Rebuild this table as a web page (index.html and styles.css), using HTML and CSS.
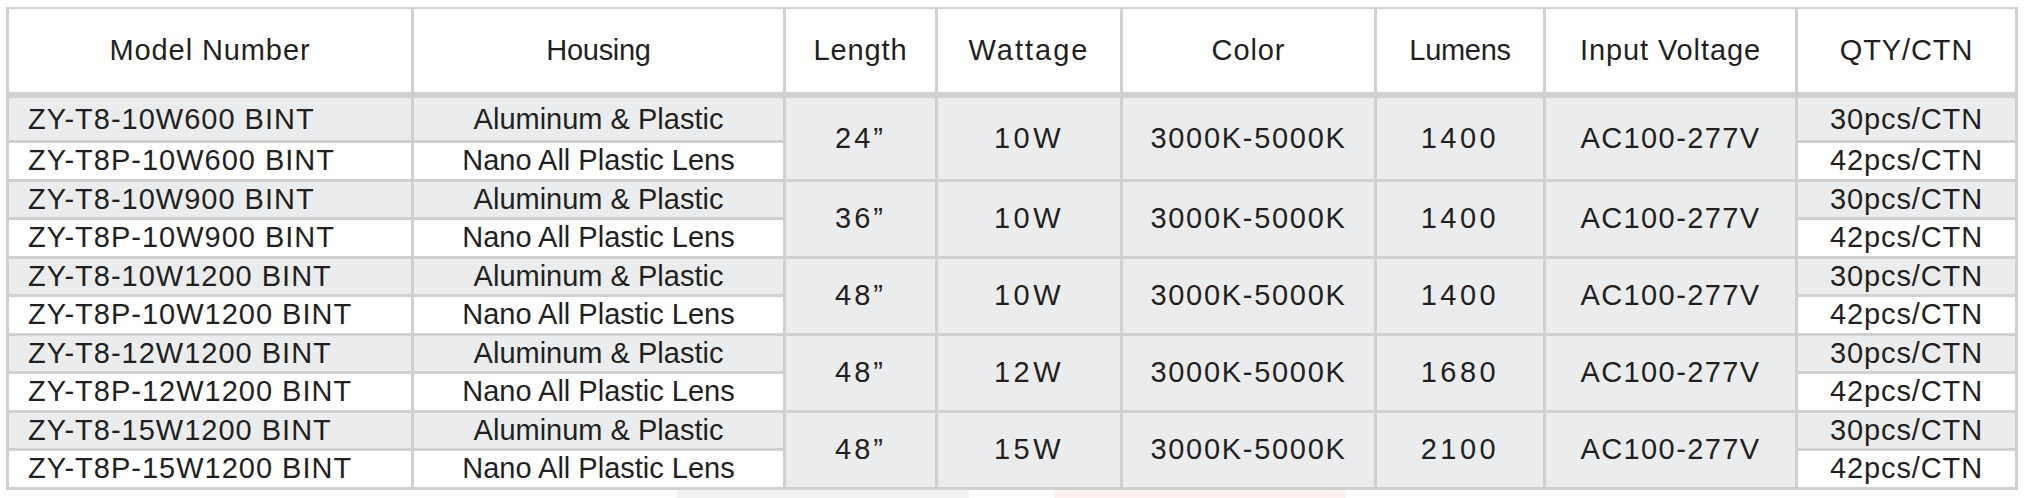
FILE: index.html
```html
<!DOCTYPE html>
<html lang="en">
<head>
<meta charset="utf-8">
<title>T8 Tube Specifications</title>
<link rel="stylesheet" href="styles.css">
</head>
<body>
<div class="sheet">
  <div class="hd">Model Number</div>
  <div class="hd tight">Housing</div>
  <div class="hd">Length</div>
  <div class="hd wide">Wattage</div>
  <div class="hd">Color</div>
  <div class="hd tight">Lumens</div>
  <div class="hd">Input Voltage</div>
  <div class="hd">QTY/CTN</div>

  <div class="c a model">ZY-T8-10W600 BINT</div>
  <div class="c a">Aluminum &amp; Plastic</div>
  <div class="c m len">24”</div>
  <div class="c m num">10W</div>
  <div class="c m cct">3000K-5000K</div>
  <div class="c m num">1400</div>
  <div class="c m volt">AC100-277V</div>
  <div class="c a qty">30pcs/CTN</div>
  <div class="c b model">ZY-T8P-10W600 BINT</div>
  <div class="c b">Nano All Plastic Lens</div>
  <div class="c b qty">42pcs/CTN</div>

  <div class="c a model">ZY-T8-10W900 BINT</div>
  <div class="c a">Aluminum &amp; Plastic</div>
  <div class="c m len">36”</div>
  <div class="c m num">10W</div>
  <div class="c m cct">3000K-5000K</div>
  <div class="c m num">1400</div>
  <div class="c m volt">AC100-277V</div>
  <div class="c a qty">30pcs/CTN</div>
  <div class="c b model">ZY-T8P-10W900 BINT</div>
  <div class="c b">Nano All Plastic Lens</div>
  <div class="c b qty">42pcs/CTN</div>

  <div class="c a model">ZY-T8-10W1200 BINT</div>
  <div class="c a">Aluminum &amp; Plastic</div>
  <div class="c m len">48”</div>
  <div class="c m num">10W</div>
  <div class="c m cct">3000K-5000K</div>
  <div class="c m num">1400</div>
  <div class="c m volt">AC100-277V</div>
  <div class="c a qty">30pcs/CTN</div>
  <div class="c b model">ZY-T8P-10W1200 BINT</div>
  <div class="c b">Nano All Plastic Lens</div>
  <div class="c b qty">42pcs/CTN</div>

  <div class="c a model">ZY-T8-12W1200 BINT</div>
  <div class="c a">Aluminum &amp; Plastic</div>
  <div class="c m len">48”</div>
  <div class="c m num">12W</div>
  <div class="c m cct">3000K-5000K</div>
  <div class="c m num">1680</div>
  <div class="c m volt">AC100-277V</div>
  <div class="c a qty">30pcs/CTN</div>
  <div class="c b model">ZY-T8P-12W1200 BINT</div>
  <div class="c b">Nano All Plastic Lens</div>
  <div class="c b qty">42pcs/CTN</div>

  <div class="c a model">ZY-T8-15W1200 BINT</div>
  <div class="c a">Aluminum &amp; Plastic</div>
  <div class="c m len">48”</div>
  <div class="c m num">15W</div>
  <div class="c m cct">3000K-5000K</div>
  <div class="c m num">2100</div>
  <div class="c m volt">AC100-277V</div>
  <div class="c a qty">30pcs/CTN</div>
  <div class="c b model">ZY-T8P-15W1200 BINT</div>
  <div class="c b">Nano All Plastic Lens</div>
  <div class="c b qty">42pcs/CTN</div>
</div>
<div class="strip">
  <div class="ghost gray"></div>
  <div class="ghost pink"></div>
</div>
</body>
</html>
```
FILE: styles.css
```css
html, body {
  margin: 0;
  padding: 0;
  background: #ffffff;
}

body {
  font-family: "Liberation Sans", Arial, sans-serif;
  color: #231f20;
  overflow: hidden;
}

.sheet {
  display: grid;
  grid-template-columns: 405px 372px 152px 185px 254px 169px 252px 220px;
  grid-template-rows: 89px 45px repeat(9, 38.5px);
  width: max-content;
  margin: 7px 0 0 6px;
  border-left: 3px solid #d0d0d0;
  border-top: 2px solid #d0d0d0;
}

.hd,
.c {
  box-sizing: border-box;
  display: flex;
  align-items: center;
  justify-content: center;
  border-right: 3px solid #d0d0d0;
  border-bottom: 3px solid #d0d0d0;
  font-size: 29px;
  letter-spacing: 0;
  white-space: nowrap;
  overflow: hidden;
}

.hd {
  background: #ffffff;
  border-bottom-width: 6px;
  letter-spacing: 0.9px;
}

.hd.tight {
  letter-spacing: -0.3px;
}

.hd.wide {
  letter-spacing: 2px;
}

.a {
  background: #ebecee;
}

.b {
  background: #ffffff;
}

.m {
  background: #ebecee;
  grid-row: span 2;
}

.model {
  justify-content: flex-start;
  padding-left: 19px;
  letter-spacing: 1px;
}

.len {
  letter-spacing: 3px;
}

.num {
  letter-spacing: 3.5px;
}

.cct {
  letter-spacing: 1.7px;
}

.volt {
  letter-spacing: 1.4px;
}

.qty {
  letter-spacing: 0.9px;
}

.strip {
  display: flex;
  height: 8px;
  padding-left: 677px;
  gap: 85px;
}

.ghost {
  width: 292px;
  height: 8px;
}

.gray {
  background: #f3f3f3;
}

.pink {
  background: #fdf1f1;
}
```
